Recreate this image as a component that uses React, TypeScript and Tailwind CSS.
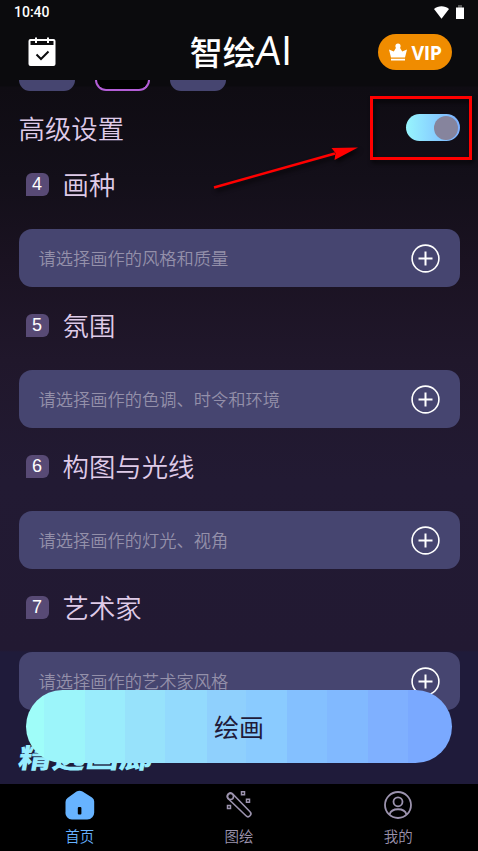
import { useState } from "react";

const sections = [
  { no: 4, title: "画种", hint: "请选择画作的风格和质量" },
  { no: 5, title: "氛围", hint: "请选择画作的色调、时令和环境" },
  { no: 6, title: "构图与光线", hint: "请选择画作的灯光、视角" },
  { no: 7, title: "艺术家", hint: "请选择画作的艺术家风格" },
];

function StatusBar() {
  return (
    <div className="flex h-6 items-center justify-between pl-3.5 pr-3.5 font-['Roboto',sans-serif]">
      <span className="text-[14px] leading-6 font-medium text-white">10:40</span>
      <div className="flex items-center gap-[7px]">
        <svg width="15" height="13" viewBox="0 0 15 13" fill="#fff">
          <path d="M0 3C4-.8 11-.8 15 3L7.5 12.8Z" />
        </svg>
        <svg width="8" height="14" viewBox="0 0 8 14">
          <path d="M2 0h4v3H2z" fill="#555" />
          <path d="M0 2.500h8V14H0z" fill="#fff" />
        </svg>
      </div>
    </div>
  );
}

function Header() {
  return (
    <header className="flex h-14 items-center justify-between pl-7 pr-[26px]">
      <svg width="28" height="30" viewBox="0 0 28 30">
        <path
          fill="#fff"
          fillRule="evenodd"
          d="M2.500 2H7V.5h2V2h10V.5h2V2h4.500A2 2 0 0 1 27.500 4v23a2 2 0 0 1-2 2h-23a2 2 0 0 1-2-2V4a2 2 0 0 1 2-2ZM2.500 4v4h23V4H21v2h-2V4H9v2H7V4Z"
        />
        <path d="m8.500 17.500 4.500 4.500 7.500-7.500" fill="none" stroke="#0b0b0d" strokeWidth="2" />
      </svg>
      <h1 className="ml-[48px] flex items-center text-[33px] leading-10 text-white">
        <span className="pb-0.5 font-medium">智绘</span>
        <span className="inline-block skew-x-[-5deg] pb-1 font-['Open_Sans',sans-serif] text-[40px]">A</span>
        <span className="pb-1 font-['Open_Sans',sans-serif] text-[40px] font-medium">I</span>
      </h1>
      <button className="flex h-9 w-[74px] items-center justify-center gap-[5px] rounded-full bg-[#f08c00] text-white">
        <svg width="18" height="18" viewBox="0 0 18 18" fill="#fff">
          <circle cx="9" cy="3" r="2.600" />
          <path d="M0 6.500 4.800 8.500 7.500 4h3l2.700 4.500L18 6.500 16 14.500H2ZM2 15.800h14v1.700H2z" />
        </svg>
        <span className="pt-0.5 font-['Open_Sans',sans-serif] text-[19.500px] leading-6 font-bold tracking-[-0.5px]">VIP</span>
      </button>
    </header>
  );
}

function Section({ no, title, hint }: { no: number; title: string; hint: string }) {
  return (
    <section className="h-[141px]">
      <div className="flex h-[42px] items-center pl-[7px]">
        <span className="mr-3.5 flex size-[23px] items-center justify-center rounded-[6px] rounded-bl-none bg-[#584a75] font-['Liberation_Sans',sans-serif] text-[18px] leading-none text-white">
          {no}
        </span>
        <h3 className="text-[26.400px] leading-[42px] font-[350] text-[#dfcbe8]">{title}</h3>
      </div>
      <button className="mt-6 flex h-[58px] w-full items-center justify-between rounded-[13px] bg-[#464570] pl-5 pr-5 text-left">
        <span className="text-[17.250px] font-[350] text-[#9490aa]">{hint}</span>
        <svg width="29" height="29" viewBox="0 0 29 29" fill="none" stroke="#fff">
          <circle cx="14.500" cy="14.500" r="13.400" strokeWidth="1.600" />
          <path d="M14.500 7.500v14M7.500 14.500h14" strokeWidth="2" />
        </svg>
      </button>
    </section>
  );
}

function Annotation() {
  return (
    <svg
      className="pointer-events-none absolute top-[90px] left-[210px] drop-shadow-[2px_3px_2px_rgba(0,0,0,0.7)]"
      width="268"
      height="105"
      viewBox="210 90 268 105"
    >
      <rect x="371.500" y="97.500" width="99" height="61" fill="none" stroke="#f00" strokeWidth="3" />
      <path d="m214 187.500 121-34" stroke="#f00" strokeWidth="2.400" />
      <path d="m358 147.500-26.500.5 4 5-1 7Z" fill="#f00" />
    </svg>
  );
}

function TabBar() {
  return (
    <nav className="grid h-[67px] grid-cols-3 bg-black text-[14.500px] leading-5 text-[#9c93ae]">
      <div className="flex flex-col items-center pt-1.5 text-[#67b3ff]">
        <svg width="30" height="30" viewBox="0 0 30 30">
          <path
            fill="currentColor"
            d="M11.500 1.500a6 6 0 0 1 6 0L27 7.500A5 5 0 0 1 29.200 12v10a7 7 0 0 1-7 7.500h-15A6.500 6.500 0 0 1 .5 22V12a5 5 0 0 1 2-4Z"
          />
          <rect x="12.800" y="17" width="3.600" height="7.500" rx="1" fill="#000" />
        </svg>
        <span className="mt-1.5 font-[350]">首页</span>
      </div>
      <div className="flex flex-col items-center pt-1.5">
        <svg width="30" height="30" viewBox="0 0 30 30" fill="none" stroke="currentColor" strokeWidth="1.600">
          <path d="M4 8.500a3 3 0 0 1 5-4.300l17 17.600a2.700 2.700 0 0 1-4 4Z" />
          <circle cx="6.500" cy="6.500" r="3" />
          <path d="M3.500 15.500h3v3h-3zM17.500 1.800h3v3h-3zM22.500 9.300h3v3h-3z" strokeWidth="1.500" />
        </svg>
        <span className="mt-1.5 font-[350]">图绘</span>
      </div>
      <div className="flex flex-col items-center pt-1.5">
        <svg width="30" height="30" viewBox="0 0 30 30" fill="none" stroke="currentColor" strokeWidth="1.800">
          <circle cx="15" cy="15" r="13" />
          <circle cx="15" cy="11.800" r="4.500" />
          <path d="M6.500 24.500c2-7 15-7 17 0" />
        </svg>
        <span className="mt-1.5 font-[350]">我的</span>
      </div>
    </nav>
  );
}

export default function App() {
  const [advanced, setAdvanced] = useState(true);

  return (
    <div className="relative flex h-[851px] w-[478px] flex-col overflow-hidden bg-[#0b0b0d] font-['Noto_Sans_CJK_SC',sans-serif]">
      <StatusBar />
      <Header />
      <main className="h-[704px] overflow-hidden bg-[linear-gradient(#0b0a0e_0px,#0b0a0e_6px,#0f0c13_7px,#130f19_100px,#1a1221_180px,#20172b_280px,#221a33_400px,#221932_570px,#1f1b3a_572px,#1f1b3a_100%)] px-[18.500px]">
        <div className="flex gap-5">
          <div className="h-[10.500px] w-[56px] rounded-b-[15px] bg-[#464570]" />
          <div className="h-[10.500px] w-[55px] rounded-b-[15px] border-2 border-t-0 border-[#b35ed6] bg-black" />
          <div className="h-[10.500px] w-[56px] rounded-b-[15px] bg-[#464570]" />
        </div>
        <div className="mt-[12.500px] flex h-[50px] items-center justify-between">
          <h2 className="text-[26.400px] font-[350] text-[#dfcbe8]">高级设置</h2>
          <button
            role="switch"
            aria-checked={advanced}
            onClick={() => setAdvanced(!advanced)}
            className="mb-px flex h-[27px] w-[54px] items-center justify-end rounded-full bg-linear-to-r from-[#97f5fd] to-[#7caeff] pr-0.5"
          >
            <span className="size-6 rounded-full bg-[#86849d]" />
          </button>
        </div>
        <div className="mt-[10px]">
          {sections.map((s) => (
            <Section key={s.no} {...s} />
          ))}
        </div>
        <h2 className="mt-[2px] inline-block origin-left scale-x-[1.25] skew-x-[-8deg] text-[27px] leading-[56px] font-black text-[#98edff]">
          精选画廊
        </h2>
      </main>
      <TabBar />
      <button className="absolute top-[690px] left-[26px] h-[73px] w-[426px] rounded-full bg-[linear-gradient(90deg,#9ffdf9_0_18px,#9cf5fa_18px_59px,#9aecfc_59px_99px,#97e2fb_99px_139px,#93dafd_139px_181px,#8fd0fd_181px_220px,#8acbff_220px_261px,#84c0ff_261px_301px,#81b9ff_301px_342px,#7fb0ff_342px_382px,#7aa9ff_382px)] text-[25px] text-[#1f1b3a]">
        绘画
      </button>
      <Annotation />
    </div>
  );
}
